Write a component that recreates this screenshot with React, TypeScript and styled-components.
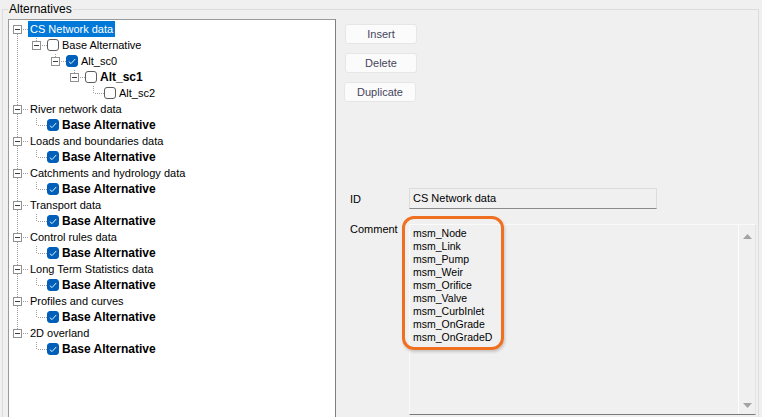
import React from "react";
import styled, { createGlobalStyle } from "styled-components";

const GlobalStyle = createGlobalStyle`
  html, body { margin: 0; padding: 0; background: #f0f0f0; }
  #root { width: 762px; height: 417px; overflow: hidden; }
  * { box-sizing: border-box; }
`;

const FONT = `"Liberation Sans", Arial, sans-serif`;

const Window = styled.div`
  width: 762px;
  height: 417px;
  background: #f0f0f0;
  font-family: ${FONT};
  font-size: 11px;
  color: #000;
  overflow: hidden;
  padding-top: 1px;
`;

const GroupBox = styled.fieldset`
  margin: 0 3px 0 2px;
  padding: 2px 0 0 5px;
  border: 1px solid #dcdcdc;
  min-height: 440px;
  min-width: 0;
`;

const Legend = styled.legend`
  padding: 0 1px;
  margin-left: 0;
  font-size: 12px;
  line-height: 16px;
  color: #000;
`;

const Body = styled.div`
  display: flex;
  align-items: flex-start;
`;

const TreePanel = styled.div`
  width: 328px;
  height: 420px;
  background: #fff;
  border: 1px solid #9a9a9a;
  border-right-color: #7f7f7f;
  padding-top: 1px;
`;

const TreeRow = styled.div`
  display: flex;
  align-items: center;
  height: 16px;
  white-space: nowrap;
`;

const Label = styled.span<{ $bold?: boolean; $selected?: boolean }>`
  display: inline-block;
  height: 16px;
  line-height: 16px;
  padding: 0 2px;
  font-size: ${(p) => (p.$bold ? "12px" : "11px")};
  font-weight: ${(p) => (p.$bold ? 700 : 400)};
  background: ${(p) => (p.$selected ? "#0078d7" : "transparent")};
  color: ${(p) => (p.$selected ? "#fff" : "#000")};
`;

const Check = styled.span<{ $checked?: boolean }>`
  display: inline-flex;
  align-items: center;
  justify-content: center;
  width: 12px;
  height: 12px;
  border-radius: 3px;
  border: 1px solid ${(p) => (p.$checked ? "#005fb8" : "#5c5c5c")};
  background: ${(p) => (p.$checked ? "#005fb8" : "#fff")};
  margin-right: 1px;
  flex: none;
`;

const Cell = styled.svg`
  display: block;
  flex: none;
`;

const RightPane = styled.div`
  flex: 1;
  display: flex;
  flex-direction: column;
`;

const ButtonStack = styled.div`
  display: flex;
  flex-direction: column;
  gap: 9px;
  padding: 5px 0 0 9px;
`;

const Button = styled.button<{ $shift?: number }>`
  width: 72px;
  height: 20px;
  margin-left: ${(p) => p.$shift ?? 0}px;
  background: #fbfbfb;
  border: 1px solid #e6e6e6;
  border-radius: 3px;
  font-family: ${FONT};
  font-size: 11px;
  color: #45455a;
  padding: 0;
  line-height: 18px;
`;

const Form = styled.div`
  margin-top: 86px;
  padding-left: 14px;
  display: grid;
  grid-template-columns: 59px auto;
  row-gap: 15px;
  align-items: start;
`;

const FieldLabel = styled.div<{ $center?: boolean }>`
  font-size: 11px;
  line-height: 14px;
  align-self: ${(p) => (p.$center ? "center" : "start")};
  margin-top: ${(p) => (p.$center ? 0 : -2)}px;
`;

const TextField = styled.div`
  width: 248px;
  height: 21px;
  border: 1px solid #dcdcdc;
  border-bottom-color: #8a8a8a;
  background: #f0f0f0;
  padding: 0 3px;
  font-size: 11px;
  line-height: 19px;
`;

const CommentBox = styled.div`
  position: relative;
  width: 347px;
  height: 191px;
  border: 1px solid #e4e4e4;
  border-top-color: #fafafa;
  border-left-color: #fafafa;
  border-bottom-color: #7a7a7a;
  background: #f0f0f0;
  display: flex;
`;

const CommentText = styled.div`
  flex: 1;
  padding: 2px 3px;
  font-size: 10.5px;
  line-height: 13px;
`;

const ScrollBar = styled.div`
  width: 17px;
  border-left: 1px solid #fdfdfd;
  display: flex;
  flex-direction: column;
  justify-content: space-between;
  align-items: center;
  padding: 9px 0 6px;
`;

const Highlight = styled.div`
  position: absolute;
  left: -8px;
  top: -9px;
  width: 102px;
  height: 134px;
  border: 3px solid #f07021;
  border-radius: 12px;
  box-shadow: 1px 2px 3px rgba(0, 0, 0, 0.18);
  pointer-events: none;
`;

const DOT = "#a0a0a0";

function VLine({ from, to }: { from: number; to: number }) {
  const dots = [];
  for (let y = from; y < to; y += 2) dots.push(<rect key={y} x={8} y={y} width={1} height={1} fill={DOT} />);
  return <>{dots}</>;
}
function HLine({ from, to }: { from: number; to: number }) {
  const dots = [];
  for (let x = from; x < to; x += 2) dots.push(<rect key={x} x={x} y={8} width={1} height={1} fill={DOT} />);
  return <>{dots}</>;
}

function Guide({ on }: { on: boolean }) {
  return (
    <Cell width={19} height={16}>
      {on && <VLine from={1} to={16} />}
    </Cell>
  );
}

function Connector({
  top,
  bottom,
  expander,
  width = 19,
}: {
  top: boolean;
  bottom: boolean;
  expander: boolean;
  width?: number;
}) {
  return (
    <Cell width={width} height={16}>
      {top && <VLine from={1} to={8} />}
      {bottom && <VLine from={9} to={16} />}
      <HLine from={10} to={width} />
      {expander && (
        <g shapeRendering="crispEdges">
          <rect x={4.5} y={4.5} width={8} height={8} fill="#fff" stroke="#919191" />
          <rect x={6} y={8} width={5} height={1} fill="#3c3c3c" />
        </g>
      )}
    </Cell>
  );
}

function CheckMark() {
  return (
    <svg width={8} height={7} viewBox="0 0 8 7">
      <path d="M0.8 3.6 L3 5.6 L7.2 1" fill="none" stroke="#e8f1fb" strokeWidth={1} />
    </svg>
  );
}

type Row = {
  level: number;
  label: string;
  guides: boolean[];
  top: boolean;
  bottom: boolean;
  expander?: boolean;
  check?: "on" | "off";
  bold?: boolean;
  selected?: boolean;
};

const roots = [
  "CS Network data",
  "River network data",
  "Loads and boundaries data",
  "Catchments and hydrology data",
  "Transport data",
  "Control rules data",
  "Long Term Statistics data",
  "Profiles and curves",
  "2D overland",
];

const rows: Row[] = [];
roots.forEach((name, i) => {
  const last = i === roots.length - 1;
  rows.push({
    level: 0,
    label: name,
    guides: [],
    top: i > 0,
    bottom: !last,
    expander: true,
    selected: i === 0,
  });
  if (i === 0) {
    rows.push({ level: 1, label: "Base Alternative", guides: [true], top: true, bottom: false, expander: true, check: "off" });
    rows.push({ level: 2, label: "Alt_sc0", guides: [true, false], top: true, bottom: false, expander: true, check: "on" });
    rows.push({ level: 3, label: "Alt_sc1", guides: [true, false, false], top: true, bottom: false, expander: true, check: "off", bold: true });
    rows.push({ level: 4, label: "Alt_sc2", guides: [true, false, false, false], top: true, bottom: false, check: "off" });
  } else {
    rows.push({ level: 1, label: "Base Alternative", guides: [!last], top: true, bottom: false, check: "on", bold: true });
  }
});

const comments = [
  "msm_Node",
  "msm_Link",
  "msm_Pump",
  "msm_Weir",
  "msm_Orifice",
  "msm_Valve",
  "msm_CurbInlet",
  "msm_OnGrade",
  "msm_OnGradeD",
];

function Arrow({ up }: { up?: boolean }) {
  return (
    <svg width={9} height={5} viewBox="0 0 9 5">
      <path d={up ? "M0 5 L4.5 0 L9 5 Z" : "M0 0 L4.5 5 L9 0 Z"} fill="#a3a3a3" />
    </svg>
  );
}

export default function App() {
  return (
    <>
      <GlobalStyle />
      <Window>
        <GroupBox>
          <Legend>Alternatives</Legend>
          <Body>
            <TreePanel>
              {rows.map((r, idx) => (
                <TreeRow key={idx}>
                  {r.guides.map((g, gi) => (
                    <Guide key={gi} on={g} />
                  ))}
                  <Connector top={r.top} bottom={r.bottom} expander={!!r.expander} />
                  {r.check && (
                    <Check $checked={r.check === "on"}>{r.check === "on" && <CheckMark />}</Check>
                  )}
                  <Label $bold={r.bold} $selected={r.selected}>
                    {r.label}
                  </Label>
                </TreeRow>
              ))}
            </TreePanel>
            <RightPane>
              <ButtonStack>
                <Button>Insert</Button>
                <Button>Delete</Button>
                <Button $shift={-1}>Duplicate</Button>
              </ButtonStack>
              <Form>
                <FieldLabel $center>ID</FieldLabel>
                <TextField>CS Network data</TextField>
                <FieldLabel>Comment</FieldLabel>
                <CommentBox>
                  <CommentText>
                    {comments.map((c) => (
                      <div key={c}>{c}</div>
                    ))}
                  </CommentText>
                  <ScrollBar>
                    <Arrow up />
                    <Arrow />
                  </ScrollBar>
                  <Highlight />
                </CommentBox>
              </Form>
            </RightPane>
          </Body>
        </GroupBox>
      </Window>
    </>
  );
}
